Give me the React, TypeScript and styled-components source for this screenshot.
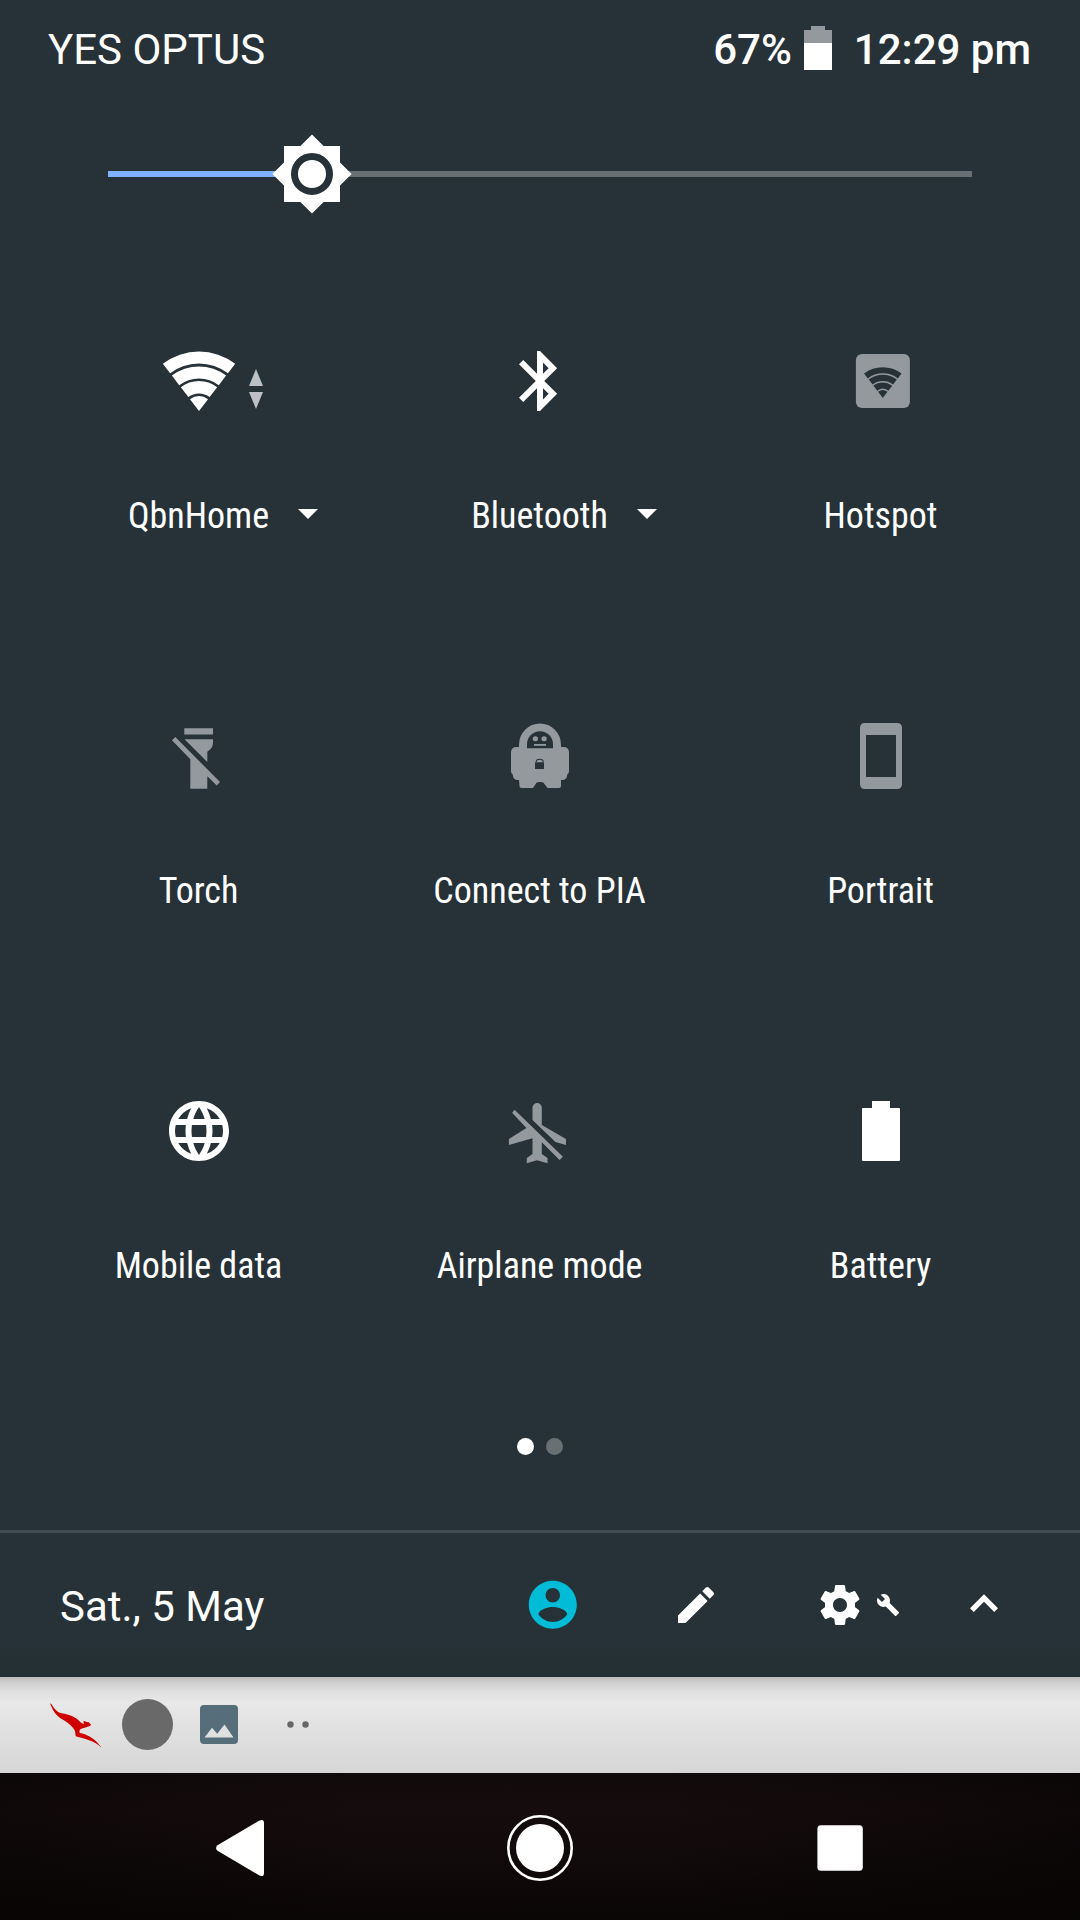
import React from "react";
import styled, { createGlobalStyle } from "styled-components";

const GlobalStyle = createGlobalStyle`
  * { box-sizing: border-box; }
  body { margin: 0; background: #263238; }
`;

const dim = "#94999d";

const Screen = styled.main`
  width: 1080px;
  height: 1920px;
  display: flex;
  flex-direction: column;
  overflow: hidden;
  background: #273238;
  color: #fff;
  font-family: Roboto, "Liberation Sans", sans-serif;
`;

const StatusBar = styled.header`
  height: 98px;
  padding: 2px 49px 0 48px;
  display: flex;
  align-items: center;
  justify-content: space-between;
  font-size: 42px;
  line-height: 50px;
`;

const StatusGroup = styled.div`
  display: flex;
  align-items: center;
  font-weight: 500;
`;

const Clock = styled.span`
  margin-left: 22px;
`;

const StatusBattery = styled.svg`
  display: block;
  margin: -4px 0 0 12px;
`;

const SliderRow = styled.div`
  height: 152px;
  padding: 0 108px;
  display: flex;
  align-items: center;
`;

const SliderFill = styled.div`
  width: 168px;
  height: 6px;
  background: #80b1ff;
`;

const SliderRest = styled.div`
  flex: 1;
  height: 6px;
  background: #687074;
`;

const Thumb = styled.svg`
  display: block;
  width: 84px;
  height: 84px;
  margin: 0 -6px;
  position: relative;
`;

const Tiles = styled.section`
  height: 1125px;
  padding: 0 28.5px;
  display: grid;
  grid-template-columns: repeat(3, 341px);
  grid-template-rows: repeat(3, 375px);
`;

const Tile = styled.div`
  display: flex;
  flex-direction: column;
  align-items: center;
  padding-top: 95px;
`;

const IconSlot = styled.div`
  height: 72px;
  position: relative;
`;

const Icon = styled.svg<{ $size?: number }>`
  display: block;
  width: ${(p) => p.$size ?? 72}px;
  height: ${(p) => p.$size ?? 72}px;
  overflow: visible;
`;

const Traffic = styled.svg`
  position: absolute;
  left: 86px;
  top: 24px;
`;

const LabelRow = styled.div`
  margin-top: 77px;
  height: 44px;
  padding-right: 1px;
  position: relative;
  font-family: "Roboto Condensed", Roboto, "Liberation Sans", sans-serif;
  font-stretch: 75%;
  font-size: 36px;
  line-height: 44px;
  white-space: nowrap;
`;

const Caret = styled.svg`
  position: absolute;
  left: calc(100% + 28px);
  top: 15px;
`;

const Pager = styled.div`
  height: 155px;
  padding: 62.5px 0 0 0.5px;
  display: flex;
  justify-content: center;
  gap: 12px;
`;

const PageDot = styled.i<{ $active?: boolean }>`
  width: 17px;
  height: 17px;
  border-radius: 50%;
  background: ${(p) => (p.$active ? "#fff" : "#687074")};
`;

const Footer = styled.footer`
  height: 147px;
  border-top: 3px solid #414c52;
  background: linear-gradient(#273238 70%, #242f34);
  padding: 0 68px 0 60px;
  display: flex;
  align-items: center;
  font-size: 42px;
  line-height: 50px;
`;

const DateText = styled.span`
  flex: 1;
  padding-top: 3px;
`;

const Actions = styled.div`
  display: flex;
  align-items: center;
`;

const Action = styled.span<{ $gap: number }>`
  display: block;
  margin-left: ${(p) => p.$gap}px;
`;

const Notifications = styled.div`
  height: 96px;
  padding: 0 0 1px 49px;
  display: flex;
  align-items: center;
  background: linear-gradient(#bdbdbd 0, #cfcfcf 6px, #dfdfdf 14px, #e8e8e8 26px, #e4e4e4 40px, #d6d6d6 100%);
`;

const Note = styled.svg<{ $gap?: number }>`
  display: block;
  margin-left: ${(p) => p.$gap ?? 0}px;
`;

const NavBar = styled.nav`
  height: 147px;
  display: flex;
  justify-content: center;
  align-items: center;
  gap: 228px;
  padding-top: 3px;
  background: linear-gradient(90deg, rgba(5, 3, 3, 0.4), rgba(5, 3, 3, 0) 35%, rgba(5, 3, 3, 0) 60%, rgba(5, 3, 3, 0.5)),
    linear-gradient(#110b0b, #160c0d 25%, #100a0a 60%, #0a0605);
`;

// Fan of four concentric bands that meet at (cx, cy).
function wifiPath(cx: number, cy: number, scale: number) {
  const bands = [[0, 14.8], [17.5, 29.8], [32.5, 44.5], [47.5, 59.4]];
  const s = 0.609;
  const c = 0.793;
  return bands
    .map(([a, b]) => {
      const r0 = a * scale;
      const r1 = b * scale;
      return `M${cx - r1 * s} ${cy - r1 * c}A${r1} ${r1} 0 0 1 ${cx + r1 * s} ${cy - r1 * c}L${cx + r0 * s} ${cy - r0 * c}${
        r0 ? `A${r0} ${r0} 0 0 0 ${cx - r0 * s} ${cy - r0 * c}` : ""
      }Z`;
    })
    .join("");
}

const WifiIcon = () => (
  <Icon viewBox="0 0 72 72" fill="#fff"><path d={wifiPath(36, 65.9, 1)} /></Icon>
);

const BluetoothIcon = () => (
  <Icon viewBox="0 0 24 24" fill="#fff">
    <path d="M17.71 7.71L12 2h-1v7.59L6.41 5 5 6.41 10.59 12 5 17.59 6.41 19 11 14.41V22h1l5.71-5.71-4.3-4.29 4.3-4.29zM13 5.83l1.88 1.88L13 9.59V5.83zm1.88 10.46L13 18.17v-3.76l1.88 1.88z" />
  </Icon>
);

const HotspotIcon = () => (
  <Icon viewBox="0 0 72 72">
    <rect x="10.9" y="9" width="54" height="54" rx="6" fill={dim} />
    <path d={wifiPath(37.8, 52.9, 0.518)} fill="#273238" />
  </Icon>
);

const TorchIcon = () => (
  <Icon viewBox="0 0 72 72" fill={dim}>
    <path d="M21.3 8.2H50V14.4H21.3ZM21.5 19.3H50V22C50 27 48 29 44.3 31.7V41.9Z" />
    <path d="M12.3 17L57 62 53.7 65.6 44.3 56.2V68.7H27.3V39.2L9 20.3Z" />
  </Icon>
);

const PiaIcon = () => (
  <Icon viewBox="504 720 72 72" fill={dim}>
    <path
      fillRule="evenodd"
      d="M519 747V744.5A21 21 0 0 1 561 744.5V747H563.5Q569 747 569 752.5V771Q569 774 567.3 774.5Q567 780 562 780H561V786Q561 788 559 788H547.5L543.5 782.7Q542.5 782 541 782H539Q537.5 782 536.5 782.7L533 788H521.5Q519.5 788 519.5 786L519 780H518Q513 780 512.7 774.5Q511 774 511 771V752.5Q511 747 516.5 747ZM527 748.3H553V744.3A13 13 0 0 0 527 744.3ZM535 762.3V769H544V762.3Z"
    />
    <ellipse cx="535.4" cy="738.7" rx="2.7" ry="2.5" />
    <ellipse cx="544.1" cy="738.7" rx="2.7" ry="2.5" />
    <path d="M534 744H546V745.8H534Z" />
    <path d="M536.2 762C536.2 758.4 543.2 758.4 543.2 762" fill="none" stroke="#273238" strokeWidth="1.1" />
  </Icon>
);

const PortraitIcon = () => (
  <Icon viewBox="0 0 72 72" fill={dim}>
    <path fillRule="evenodd" d="M20 3H52Q57 3 57 8V64Q57 69 52 69H20Q15 69 15 64V8Q15 3 20 3ZM21 15V57H51V15Z" />
  </Icon>
);

const GlobeIcon = () => (
  <Icon viewBox="0 0 24 24" fill="#fff">
    <path d="M11.99 2C6.47 2 2 6.48 2 12s4.47 10 9.99 10C17.52 22 22 17.52 22 12S17.52 2 11.99 2zm6.93 6h-2.95c-.32-1.25-.78-2.45-1.38-3.56 1.84.63 3.37 1.91 4.33 3.56zM12 4.04c.83 1.2 1.48 2.53 1.91 3.96h-3.82c.43-1.43 1.08-2.76 1.91-3.96zM4.26 14C4.1 13.36 4 12.69 4 12s.1-1.36.26-2h3.38c-.08.66-.14 1.32-.14 2 0 .68.06 1.34.14 2H4.26zm.82 2h2.95c.32 1.25.78 2.45 1.38 3.56-1.84-.63-3.37-1.9-4.33-3.56zm2.95-8H5.08c.96-1.66 2.49-2.93 4.33-3.56C8.81 5.55 8.35 6.75 8.03 8zM12 19.96c-.83-1.2-1.48-2.53-1.91-3.96h3.82c-.43 1.43-1.08 2.76-1.91 3.96zM14.34 14H9.66c-.09-.66-.16-1.32-.16-2 0-.68.07-1.35.16-2h4.68c.09.65.16 1.32.16 2 0 .68-.07 1.34-.16 2zm.25 5.56c.6-1.11 1.06-2.31 1.38-3.56h2.95c-.96 1.65-2.49 2.93-4.33 3.56zM16.36 14c.08-.66.14-1.32.14-2 0-.68-.06-1.34-.14-2h3.38c.16.64.26 1.31.26 2s-.1 1.36-.26 2h-3.38z" />
  </Icon>
);

const AirplaneIcon = () => (
  <Icon viewBox="0 0 72 72" fill={dim}>
    <path d="M28.5 25V12.7A4.65 4.65 0 0 1 37.8 12.7V30L62 44V50L51.4 46.9Z" />
    <path d="M10.6 14.7L58.9 61.7 55.6 65 37.8 47.3V59L43.5 63V68.3L33.1 65.3 22.8 68.3V63L28.5 59V43.3L4.9 50V44L22.4 33 8.1 17.7Z" />
  </Icon>
);

const BatteryIcon = () => (
  <Icon viewBox="0 0 72 72" fill="#fff">
    <path d="M27 6H45V13H54Q55 13 55 14V65Q55 66 54 66H18Q17 66 17 65V14Q17 13 18 13H27Z" />
  </Icon>
);

type TileSpec = { label: string; icon: React.ReactNode; menu?: boolean; traffic?: boolean };

const tiles: TileSpec[] = [
  { label: "QbnHome", icon: <WifiIcon />, menu: true, traffic: true },
  { label: "Bluetooth", icon: <BluetoothIcon />, menu: true },
  { label: "Hotspot", icon: <HotspotIcon /> },
  { label: "Torch", icon: <TorchIcon /> },
  { label: "Connect to PIA", icon: <PiaIcon /> },
  { label: "Portrait", icon: <PortraitIcon /> },
  { label: "Mobile data", icon: <GlobeIcon /> },
  { label: "Airplane mode", icon: <AirplaneIcon /> },
  { label: "Battery", icon: <BatteryIcon /> },
];

export default function App() {
  return (
    <Screen>
      <GlobalStyle />
      <StatusBar>
        <span>YES OPTUS</span>
        <StatusGroup>
          <span>67%</span>
          <StatusBattery width="28" height="44" viewBox="0 0 28 44">
            <path d="M7 0H21V4H28V17H0V4H7Z" fill={dim} />
            <path d="M0 17H28V44H0Z" fill="#fff" />
          </StatusBattery>
          <Clock>12:29 pm</Clock>
        </StatusGroup>
      </StatusBar>

      <SliderRow>
        <SliderFill />
        <Thumb viewBox="0 0 24 24">
          <path d="M20 8.69V4h-4.69L12 .69 8.69 4H4v4.69L.69 12 4 15.31V20h4.69L12 23.31 15.31 20H20v-4.69L23.31 12z" fill="#fff" />
          <circle cx="12" cy="12" r="5" fill="none" stroke="#273238" strokeWidth="2" />
        </Thumb>
        <SliderRest />
      </SliderRow>

      <Tiles>
        {tiles.map((t) => (
          <Tile key={t.label}>
            <IconSlot>
              {t.icon}
              {t.traffic && (
                <Traffic width="14" height="40" viewBox="0 0 14 40" fill="#bec1c3">
                  <path d="M7 0L14 17H0ZM0 23H14L7 40Z" />
                </Traffic>
              )}
            </IconSlot>
            <LabelRow>
              {t.label}
              {t.menu && (
                <Caret width="20" height="10" viewBox="0 0 20 10" fill="#fff">
                  <path d="M0 0H20L10 10Z" />
                </Caret>
              )}
            </LabelRow>
          </Tile>
        ))}
      </Tiles>

      <Pager>
        <PageDot $active />
        <PageDot />
      </Pager>

      <Footer>
        <DateText>Sat., 5 May</DateText>
        <Actions>
          <Action $gap={0}>
            <Icon $size={57.6} viewBox="0 0 24 24" fill="#00bcd7">
              <path d="M12 2C6.48 2 2 6.48 2 12s4.48 10 10 10 10-4.48 10-10S17.52 2 12 2zm0 3c1.66 0 3 1.34 3 3s-1.34 3-3 3-3-1.34-3-3 1.34-3 3-3zm0 14.2c-2.5 0-4.71-1.28-6-3.22.03-1.99 4-3.08 6-3.08 1.99 0 5.97 1.09 6 3.08-1.29 1.94-3.5 3.22-6 3.22z" />
            </Icon>
          </Action>
          <Action $gap={90.8}>
            <Icon $size={48} viewBox="0 0 24 24" fill="#fff">
              <path d="M3 17.25V21h3.75L17.81 9.94l-3.75-3.75L3 17.25zM20.71 7.04c.39-.39.39-1.02 0-1.41l-2.34-2.34c-.39-.39-1.02-.39-1.41 0l-1.83 1.83 3.75 3.75 1.83-1.83z" />
            </Icon>
          </Action>
          <Action $gap={96}>
            <Icon $size={48} viewBox="0 0 24 24" fill="#fff">
              <path d="M19.43 12.98c.04-.32.07-.64.07-.98s-.03-.66-.07-.98l2.11-1.65c.19-.15.24-.42.12-.64l-2-3.46c-.12-.22-.39-.3-.61-.22l-2.49 1c-.52-.4-1.08-.73-1.69-.98l-.38-2.65C14.46 2.18 14.25 2 14 2h-4c-.25 0-.46.18-.49.42l-.38 2.65c-.61.25-1.17.59-1.69.98l-2.49-1c-.23-.09-.49 0-.61.22l-2 3.46c-.13.22-.07.49.12.64l2.11 1.65c-.04.32-.07.65-.07.98s.03.66.07.98l-2.11 1.65c-.19.15-.24.42-.12.64l2 3.46c.12.22.39.3.61.22l2.49-1c.52.4 1.08.73 1.69.98l.38 2.65c.03.24.24.42.49.42h4c.25 0 .46-.18.49-.42l.38-2.65c.61-.25 1.17-.59 1.69-.98l2.49 1c.23.09.49 0 .61-.22l2-3.46c.12-.22.07-.49-.12-.64l-2.11-1.65zM12 15.5c-1.93 0-3.5-1.57-3.5-3.5s1.57-3.5 3.5-3.5 3.5 1.57 3.5 3.5-1.57 3.5-3.5 3.5z" />
            </Icon>
          </Action>
          <Action $gap={12}>
            <Icon $size={24} viewBox="0 0 24 24" fill="#fff">
              <path d="M22.7 19l-9.1-9.1c.9-2.3.4-5-1.5-6.9-2-2-5-2.4-7.4-1.3L9 6 6 9 1.6 4.7C.4 7.1.9 10.1 2.9 12.1c1.9 1.9 4.6 2.4 6.9 1.5l9.1 9.1c.4.4 1 .4 1.4 0l2.3-2.3c.5-.4.5-1.1.1-1.4z" />
            </Icon>
          </Action>
          <Action $gap={56}>
            <Icon $size={56} viewBox="0 0 24 24" fill="#fff">
              <path d="M12 7.4l-6 6 1.61 1.61L12 10.6l4.39 4.41L18 13.4z" />
            </Icon>
          </Action>
        </Actions>
      </Footer>

      <Notifications>
        <Note width="52" height="46" viewBox="139.4 127 151 138" preserveAspectRatio="none" fill="#cf0000">
          <path d="M142 131L147 134C153 146 160 154 170 159C190 162 206 167 220 177L231 188L240 194L240 183L249 187L255 188L262 196L258 199L243 204C234 206 228 208 228 213L228 219C250 224 268 235 279 248L291 263C277 250 262 242 243 237L217 230L215 214C209 201 198 192 185 183C171 176 158 165 151 151Z" />
        </Note>
        <Note $gap={20.5} width="51" height="51" viewBox="0 0 51 51" fill="#696969">
          <circle cx="25.5" cy="25.5" r="25.5" />
        </Note>
        <Note $gap={27.5} width="38" height="39" viewBox="0 0 38 39">
          <rect width="38" height="39" rx="4" fill="#566e7a" />
          <path d="M4.5 32.5L12 22.8 17.2 28.8 24.5 19.5 33.5 32.5Z" fill="#e0e0e0" />
        </Note>
        <Note $gap={49} width="22" height="7" viewBox="0 0 22 7" fill="#666">
          <circle cx="3.5" cy="3.5" r="3.2" />
          <circle cx="18.5" cy="3.5" r="3.2" />
        </Note>
      </Notifications>

      <NavBar>
        <Icon viewBox="204 1812 72 72" fill="#fff">
          <path d="M217.5 1845.2L259.5 1820.5Q264 1818.5 264 1823V1873Q264 1877.5 259.5 1875.5L217.5 1850.8Q214.5 1848 217.5 1845.2Z" />
        </Icon>
        <Icon viewBox="0 0 72 72" fill="#fff">
          <circle cx="36" cy="36" r="24" />
          <circle cx="36" cy="36" r="31.7" fill="none" stroke="#fff" strokeWidth="2.6" />
        </Icon>
        <Icon viewBox="0 0 72 72" fill="#fff">
          <rect x="13.4" y="13.3" width="45.4" height="45.4" rx="3.5" />
        </Icon>
      </NavBar>
    </Screen>
  );
}
